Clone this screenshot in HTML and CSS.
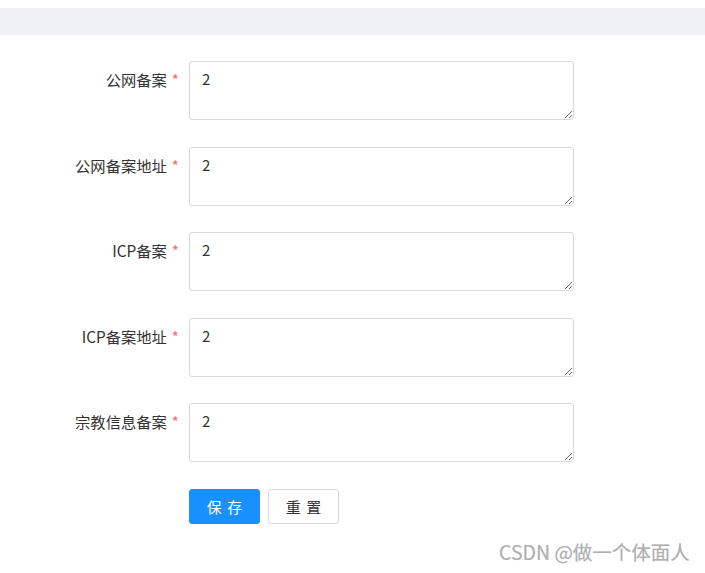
FILE: index.html
```html
<!DOCTYPE html>
<html lang="zh-CN">
<head>
<meta charset="utf-8">
<title>备案信息</title>
<link rel="stylesheet" href="styles.css">
</head>
<body>
<div class="topbar"></div>
<form class="form">
  <div class="row">
    <label class="label">公网备案<span class="req">*</span></label>
    <textarea class="field">2</textarea>
  </div>
  <div class="row">
    <label class="label">公网备案地址<span class="req">*</span></label>
    <textarea class="field">2</textarea>
  </div>
  <div class="row">
    <label class="label">ICP备案<span class="req">*</span></label>
    <textarea class="field">2</textarea>
  </div>
  <div class="row">
    <label class="label">ICP备案地址<span class="req">*</span></label>
    <textarea class="field">2</textarea>
  </div>
  <div class="row">
    <label class="label">宗教信息备案<span class="req">*</span></label>
    <textarea class="field">2</textarea>
  </div>
  <div class="actions">
    <button type="button" class="btn btn-primary">保 存</button>
    <button type="button" class="btn btn-default">重 置</button>
  </div>
</form>
<div class="watermark">CSDN @做一个体面人</div>
</body>
</html>
```
FILE: styles.css
```css
html, body {
  margin: 0;
  padding: 0;
  background: #ffffff;
}
body {
  font-family: "Noto Sans CJK SC", "Noto Sans", sans-serif;
  color: #333;
  position: relative;
  width: 705px;
  height: 573px;
  overflow: hidden;
}
.topbar {
  margin-top: 8px;
  height: 27px;
  background: #f0f1f5;
}
.form {
  padding-top: 26px;
}
.row {
  display: flex;
  align-items: flex-start;
  margin-bottom: 26.5px;
}
.label {
  flex: none;
  text-align: right;
  padding-right: 10px;
  box-sizing: border-box;
  width: 189px;
  font-size: 15.3px;
  line-height: 36px;
  color: #333;
}
.req {
  color: #f56c6c;
  margin-left: 5px;
}
.field {
  width: 385px;
  height: 59px;
  box-sizing: border-box;
  border: 1px solid #d9d9d9;
  border-radius: 3px;
  padding: 7px 12px;
  font-family: "Noto Sans CJK SC", "Noto Sans", sans-serif;
  font-size: 15px;
  line-height: 20px;
  color: #333;
  resize: vertical;
  margin: 0;
  outline: none;
}
.actions {
  display: flex;
  gap: 8px;
  padding-left: 189px;
  margin-top: 0.5px;
}
.btn {
  width: 71px;
  height: 35px;
  box-sizing: border-box;
  border-radius: 3px;
  font-family: "Noto Sans CJK SC", "Noto Sans", sans-serif;
  font-size: 15px;
  letter-spacing: 1px;
  text-indent: 1px;
  padding: 0;
  cursor: pointer;
  white-space: pre;
}
.btn-primary {
  background: #1890ff;
  border: 1px solid #1890ff;
  color: #fff;
}
.btn-default {
  background: #fff;
  border: 1px solid #d9d9d9;
  color: #333;
}
.watermark {
  position: absolute;
  left: 499px;
  top: 540px;
  font-family: "Noto Sans CJK SC", "Liberation Sans", sans-serif;
  font-size: 19.5px;
  line-height: 24px;
  color: #b0b0b0;
  text-shadow: 0 0 1px rgba(0,0,0,0.15);
}
```
